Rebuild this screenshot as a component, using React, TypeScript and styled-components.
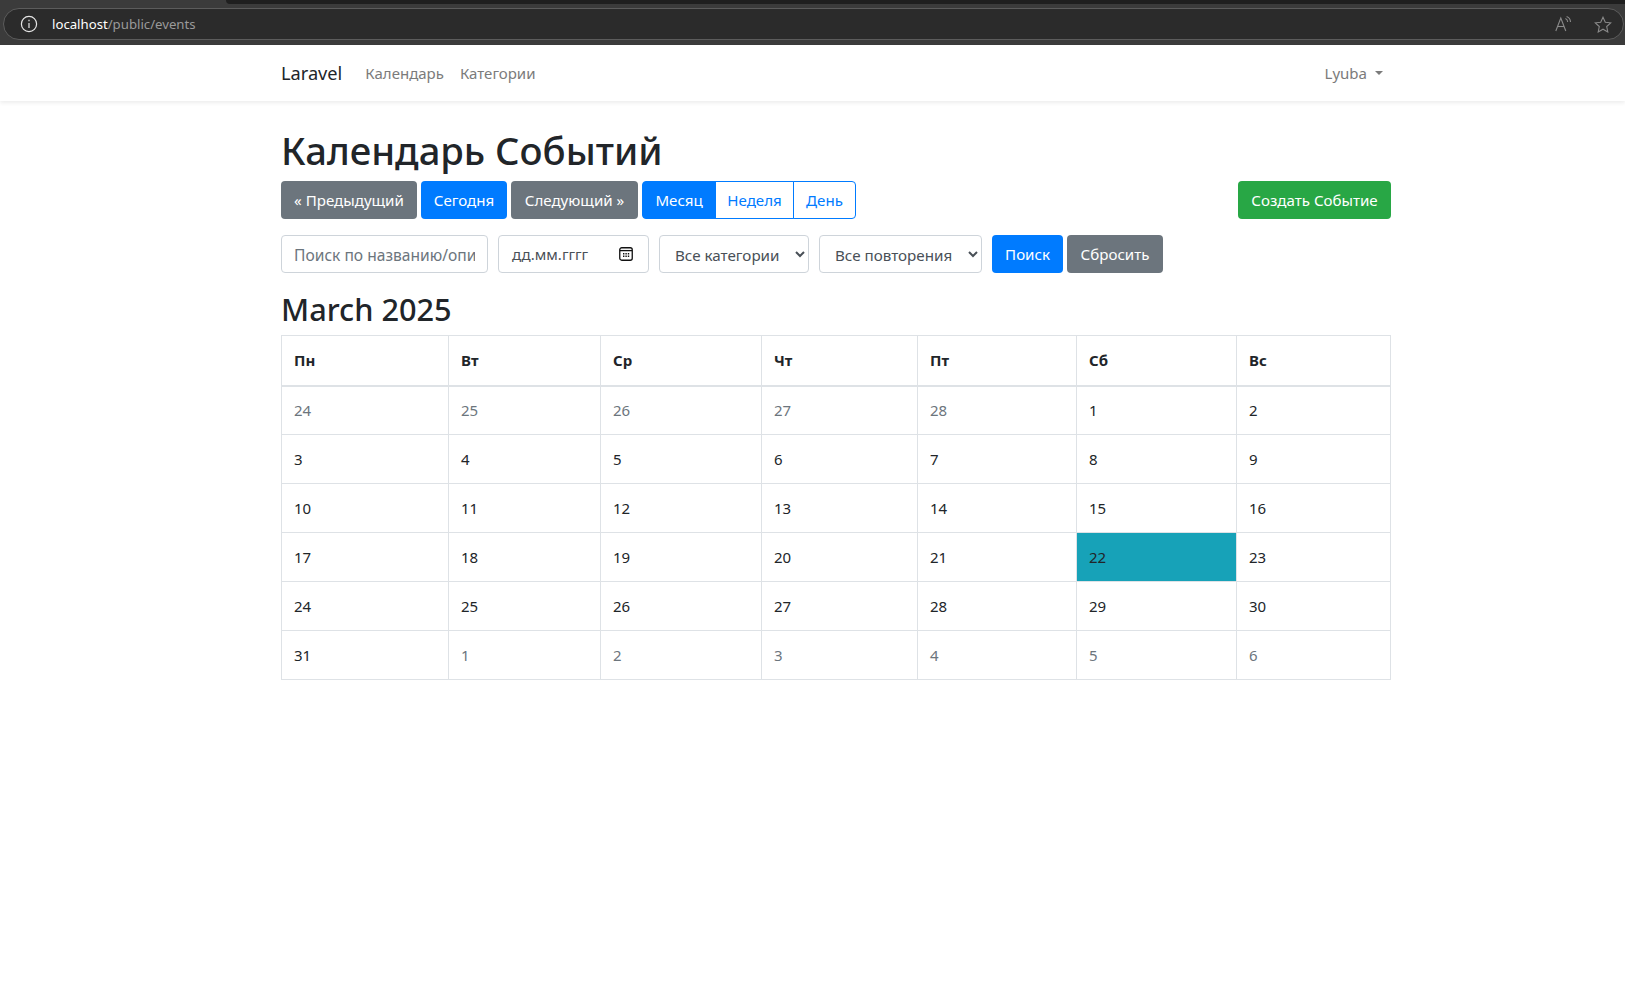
import { FC } from 'react';
import styled, { createGlobalStyle } from 'styled-components';

const GlobalStyle = createGlobalStyle`
  html, body {
    margin: 0;
    padding: 0;
    background: #fff;
  }
  body {
    font-family: "Noto Sans", "Open Sans", sans-serif;
    font-size: 16px;
    line-height: 1.5;
    color: #212529;
  }
  * {
    box-sizing: border-box;
  }
`;

const Styled = {
  Chrome: styled.div`
    height: 45px;
    background: #3b3b3b;
    display: flex;
    flex-direction: column;
  `,
  TabStrip: styled.div`
    height: 8px;
    flex: none;
  `,
  TabEdge: styled.div`
    height: 4px;
    margin-left: 226px;
    background: #1f1f1f;
    border-bottom-left-radius: 6px;
  `,
  AddressBar: styled.div`
    height: 32px;
    margin: 0 1px 0 3px;
    display: flex;
    align-items: center;
    padding: 0 11px 0 16px;
    background: #2b2b2b;
    border: 1px solid #5c5c5c;
    border-radius: 16px;
  `,
  Url: styled.div`
    flex: 1;
    margin: 1px 0 0 14px;
    font-size: 13.2px;
    color: #9a9a9a;
    white-space: nowrap;
  `,
  Host: styled.span`
    color: #fff;
  `,
  ChromeIcons: styled.div`
    display: flex;
    align-items: center;
    gap: 22px;
  `,
  Navbar: styled.nav`
    height: 56px;
    background: #fff;
    box-shadow: 0 2px 4px rgba(0, 0, 0, 0.075);
  `,
  NavInner: styled.div`
    width: 1110px;
    height: 100%;
    margin-left: 281px;
    display: flex;
    align-items: center;
  `,
  Brand: styled.span`
    padding-top: 2px;
    font-size: 18.2px;
    color: #212529;
    margin-right: 23px;
  `,
  NavLink: styled.span`
    font-size: 15px;
    color: #7b7b7b;
    margin-right: 16px;
  `,
  UserMenu: styled.div`
    margin-left: auto;
    padding-right: 8px;
    display: flex;
    align-items: center;
    font-size: 15px;
    color: #7b7b7b;
  `,
  Caret: styled.i`
    margin-left: 8px;
    border-top: 4.8px solid #7b7b7b;
    border-left: 4.8px solid transparent;
    border-right: 4.8px solid transparent;
  `,
  Main: styled.main`
    width: 1110px;
    margin-left: 281px;
    padding-top: 24px;
  `,
  Title: styled.h1`
    margin: 0 0 6px;
    font-size: 38.2px;
    line-height: 50px;
    font-weight: 500;
    white-space: nowrap;
  `,
  Toolbar: styled.div`
    display: flex;
    gap: 4px;
    margin-bottom: 16px;
  `,
  Button: styled.button<{ $variant: 'primary' | 'secondary' | 'success'; $width: number }>`
    width: ${({ $width }) => $width}px;
    height: 38px;
    padding: 0;
    border: 1px solid transparent;
    border-radius: 4px;
    font: inherit;
    font-size: 15.1px;
    white-space: nowrap;
    color: #fff;
    background: ${({ $variant }) =>
      $variant === 'primary' ? '#007bff' : $variant === 'success' ? '#28a745' : '#6c757d'};
  `,
  ViewGroup: styled.div`
    display: flex;
    margin-right: auto;
  `,
  ViewButton: styled.button<{ $active?: boolean; $width: number }>`
    width: ${({ $width }) => $width}px;
    height: 38px;
    padding: 0;
    margin-left: -1px;
    border: 1px solid #007bff;
    font: inherit;
    font-size: 15.1px;
    color: ${({ $active }) => ($active ? '#fff' : '#007bff')};
    background: ${({ $active }) => ($active ? '#007bff' : '#fff')};
    &:first-child {
      margin-left: 0;
      border-radius: 4px 0 0 4px;
    }
    &:last-child {
      border-radius: 0 4px 4px 0;
    }
  `,
  FilterForm: styled.form`
    display: flex;
    align-items: center;
    margin-bottom: 16px;
  `,
  SearchInput: styled.input`
    width: 207px;
    height: 38px;
    margin-right: 10px;
    padding: 2px 12px 0;
    border: 1px solid #ced4da;
    border-radius: 4px;
    font: inherit;
    font-size: 15.6px;
    color: #495057;
    &::placeholder {
      color: #6c757d;
      opacity: 1;
    }
  `,
  DateField: styled.div`
    width: 151px;
    height: 38px;
    margin-right: 10px;
    padding: 0 15px 0 13px;
    display: flex;
    align-items: center;
    justify-content: space-between;
    border: 1px solid #ced4da;
    border-radius: 4px;
    font-size: 15px;
    color: #495057;
  `,
  Select: styled.select<{ $width: number }>`
    width: ${({ $width }) => $width}px;
    height: 38px;
    margin-right: 10px;
    padding: 2px 0 0 11px;
    border: 1px solid #ced4da;
    border-radius: 4px;
    background: #fff;
    font: inherit;
    font-size: 15.2px;
    color: #495057;
  `,
  FilterButtons: styled.div`
    display: flex;
    gap: 4px;
  `,
  MonthTitle: styled.h2`
    margin: 0 0 6px;
    font-size: 30.7px;
    line-height: 40.4px;
    font-weight: 500;
  `,
  Table: styled.table`
    width: 1109px;
    table-layout: fixed;
    border-collapse: collapse;
    font-size: 15px;
  `,
  HeadCell: styled.th<{ $width: number }>`
    width: ${({ $width }) => $width}px;
    height: 50px;
    padding: 12px;
    text-align: left;
    font-weight: 700;
    border: 1px solid #dee2e6;
    border-bottom-width: 2px;
  `,
  Cell: styled.td<{ $muted?: boolean; $today?: boolean }>`
    height: 49px;
    padding: 12px;
    border: 1px solid #dee2e6;
    color: ${({ $muted }) => ($muted ? '#6c757d' : '#212529')};
    background: ${({ $today }) => ($today ? '#17a2b8' : 'transparent')};
  `,
};

const InfoIcon: FC = () => (
  <svg width="18" height="18" viewBox="0 0 18 18" fill="none" stroke="#e6e6e6" strokeWidth="1.2">
    <circle cx="9" cy="9" r="7.6" />
    <path d="M9 8v5" />
    <path d="M9 4.8v1.4" />
  </svg>
);

const ReadAloudIcon: FC = () => (
  <svg width="17" height="16" viewBox="0 0 17 16" fill="none" stroke="#8a8a8a" strokeWidth="1.1">
    <path d="M0.8 15 5.8 2l5 13" />
    <path d="M2.6 10.5h6.4" />
    <path d="M10.4 2.6c1.4.6 2.2 1.9 2.3 3.4" />
    <path d="M11.6.6c2.4.9 3.8 3 3.9 5.4" />
  </svg>
);

const StarIcon: FC = () => (
  <svg width="18" height="17" viewBox="0 0 18 17" fill="none" stroke="#8a8a8a" strokeWidth="1.1">
    <path d="M9 1.2l2.3 5 5.4.6-4 3.7 1.1 5.4L9 13.2l-4.8 2.7 1.1-5.4-4-3.7 5.4-.6z" />
  </svg>
);

const CalendarIcon: FC = () => (
  <svg width="14" height="14" viewBox="0 0 14 14" fill="none">
    <rect x="0.75" y="0.75" width="12.5" height="12.5" rx="2" stroke="#111" strokeWidth="1.3" />
    <path d="M1 3.6h12" stroke="#111" strokeWidth="1.3" />
    <path
      d="M4 6h1.4v1.4H4zM6.4 6h1.4v1.4H6.4zM8.8 6h1.4v1.4H8.8zM4 8.6h1.4V10H4zM6.4 8.6h1.4V10H6.4zM8.8 8.6h1.4V10H8.8z"
      fill="#111"
    />
  </svg>
);

const columns = [
  { name: 'Пн', width: 167 },
  { name: 'Вт', width: 152 },
  { name: 'Ср', width: 161 },
  { name: 'Чт', width: 156 },
  { name: 'Пт', width: 159 },
  { name: 'Сб', width: 160 },
  { name: 'Вс', width: 154 },
];

const weeks = [
  [24, 25, 26, 27, 28, 1, 2],
  [3, 4, 5, 6, 7, 8, 9],
  [10, 11, 12, 13, 14, 15, 16],
  [17, 18, 19, 20, 21, 22, 23],
  [24, 25, 26, 27, 28, 29, 30],
  [31, 1, 2, 3, 4, 5, 6],
];

const isMuted = (week: number, day: number) => (week === 0 && day > 7) || (week === 5 && day < 7);

const App: FC = () => (
  <>
    <GlobalStyle />
    <Styled.Chrome>
      <Styled.TabStrip>
        <Styled.TabEdge />
      </Styled.TabStrip>
      <Styled.AddressBar>
        <InfoIcon />
        <Styled.Url>
          <Styled.Host>localhost</Styled.Host>/public/events
        </Styled.Url>
        <Styled.ChromeIcons>
          <ReadAloudIcon />
          <StarIcon />
        </Styled.ChromeIcons>
      </Styled.AddressBar>
    </Styled.Chrome>
    <Styled.Navbar>
      <Styled.NavInner>
        <Styled.Brand>Laravel</Styled.Brand>
        <Styled.NavLink>Календарь</Styled.NavLink>
        <Styled.NavLink>Категории</Styled.NavLink>
        <Styled.UserMenu>
          Lyuba
          <Styled.Caret />
        </Styled.UserMenu>
      </Styled.NavInner>
    </Styled.Navbar>
    <Styled.Main>
      <Styled.Title>Календарь Событий</Styled.Title>
      <Styled.Toolbar>
        <Styled.Button $variant="secondary" $width={136}>« Предыдущий</Styled.Button>
        <Styled.Button $variant="primary" $width={86}>Сегодня</Styled.Button>
        <Styled.Button $variant="secondary" $width={127}>Следующий »</Styled.Button>
        <Styled.ViewGroup>
          <Styled.ViewButton $active $width={74}>Месяц</Styled.ViewButton>
          <Styled.ViewButton $width={79}>Неделя</Styled.ViewButton>
          <Styled.ViewButton $width={63}>День</Styled.ViewButton>
        </Styled.ViewGroup>
        <Styled.Button $variant="success" $width={153}>Создать Событие</Styled.Button>
      </Styled.Toolbar>
      <Styled.FilterForm>
        <Styled.SearchInput placeholder="Поиск по названию/описанию" />
        <Styled.DateField>
          дд.мм.гггг
          <CalendarIcon />
        </Styled.DateField>
        <Styled.Select $width={150}>
          <option>Все категории</option>
        </Styled.Select>
        <Styled.Select $width={163}>
          <option>Все повторения</option>
        </Styled.Select>
        <Styled.FilterButtons>
          <Styled.Button $variant="primary" $width={71}>Поиск</Styled.Button>
          <Styled.Button $variant="secondary" $width={96}>Сбросить</Styled.Button>
        </Styled.FilterButtons>
      </Styled.FilterForm>
      <Styled.MonthTitle>March 2025</Styled.MonthTitle>
      <Styled.Table>
        <thead>
          <tr>
            {columns.map((column) => (
              <Styled.HeadCell key={column.name} $width={column.width}>
                {column.name}
              </Styled.HeadCell>
            ))}
          </tr>
        </thead>
        <tbody>
          {weeks.map((week, w) => (
            <tr key={w}>
              {week.map((day, d) => (
                <Styled.Cell key={d} $muted={isMuted(w, day)} $today={w === 3 && day === 22}>
                  {day}
                </Styled.Cell>
              ))}
            </tr>
          ))}
        </tbody>
      </Styled.Table>
    </Styled.Main>
  </>
);

export default App;
